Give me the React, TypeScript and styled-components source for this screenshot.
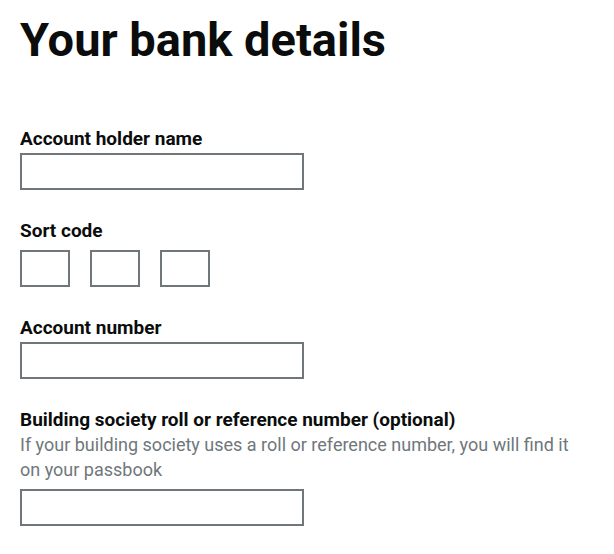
import React from "react";
import styled, { createGlobalStyle } from "styled-components";

const GlobalStyle = createGlobalStyle`
  *, *::before, *::after { box-sizing: border-box; }
  body {
    margin: 0;
    background: #ffffff;
    color: #0b0c0c;
    font-family: Roboto, "Liberation Sans", sans-serif;
  }
`;

const Page = styled.main`
  padding: 15px 20px 28px;
`;

const Title = styled.h1`
  margin: 0 0 61px;
  font-size: 47px;
  line-height: 50px;
  font-weight: 700;
`;

const Form = styled.form`
  display: flex;
  flex-direction: column;
  gap: 28px;
`;

const Field = styled.div<{ $hinted?: boolean }>`
  display: flex;
  flex-direction: column;
  align-items: flex-start;
  gap: ${({ $hinted }) => ($hinted ? "0" : "2px")};
`;

const Group = styled.fieldset`
  min-width: 0;
  margin: 0;
  padding: 0;
  border: 0;
`;

const Label = styled.label`
  font-size: 19px;
  line-height: 25px;
  font-weight: 700;
`;

const Legend = styled.legend`
  margin-bottom: 7px;
  padding: 0;
  font-size: 19px;
  line-height: 25px;
  font-weight: 700;
`;

const Hint = styled.span`
  max-width: 560px;
  margin-bottom: 7px;
  color: #6f777b;
  font-size: 18px;
  line-height: 25px;
`;

const CodeParts = styled.div`
  display: flex;
  gap: 20px;
`;

const TextInput = styled.input<{ $short?: boolean }>`
  width: ${({ $short }) => ($short ? "50px" : "284px")};
  max-width: 100%;
  height: 37px;
  margin: 0;
  padding: 4px;
  border: 2px solid #6f777b;
  border-radius: 0;
  background: #ffffff;
  color: inherit;
  font: inherit;
  font-size: 19px;
`;

export default function App() {
  return (
    <>
      <GlobalStyle />
      <Page>
        <Title>Your bank details</Title>
        <Form>
          <Field>
            <Label htmlFor="holder">Account holder name</Label>
            <TextInput id="holder" type="text" />
          </Field>
          <Group>
            <Legend>Sort code</Legend>
            <CodeParts>
              <TextInput $short type="text" inputMode="numeric" aria-label="First two digits" />
              <TextInput $short type="text" inputMode="numeric" aria-label="Middle two digits" />
              <TextInput $short type="text" inputMode="numeric" aria-label="Last two digits" />
            </CodeParts>
          </Group>
          <Field>
            <Label htmlFor="number">Account number</Label>
            <TextInput id="number" type="text" inputMode="numeric" />
          </Field>
          <Field $hinted>
            <Label htmlFor="roll">Building society roll or reference number (optional)</Label>
            <Hint id="roll-hint">
              If your building society uses a roll or reference number, you will find it on your passbook
            </Hint>
            <TextInput id="roll" type="text" aria-describedby="roll-hint" />
          </Field>
        </Form>
      </Page>
    </>
  );
}
